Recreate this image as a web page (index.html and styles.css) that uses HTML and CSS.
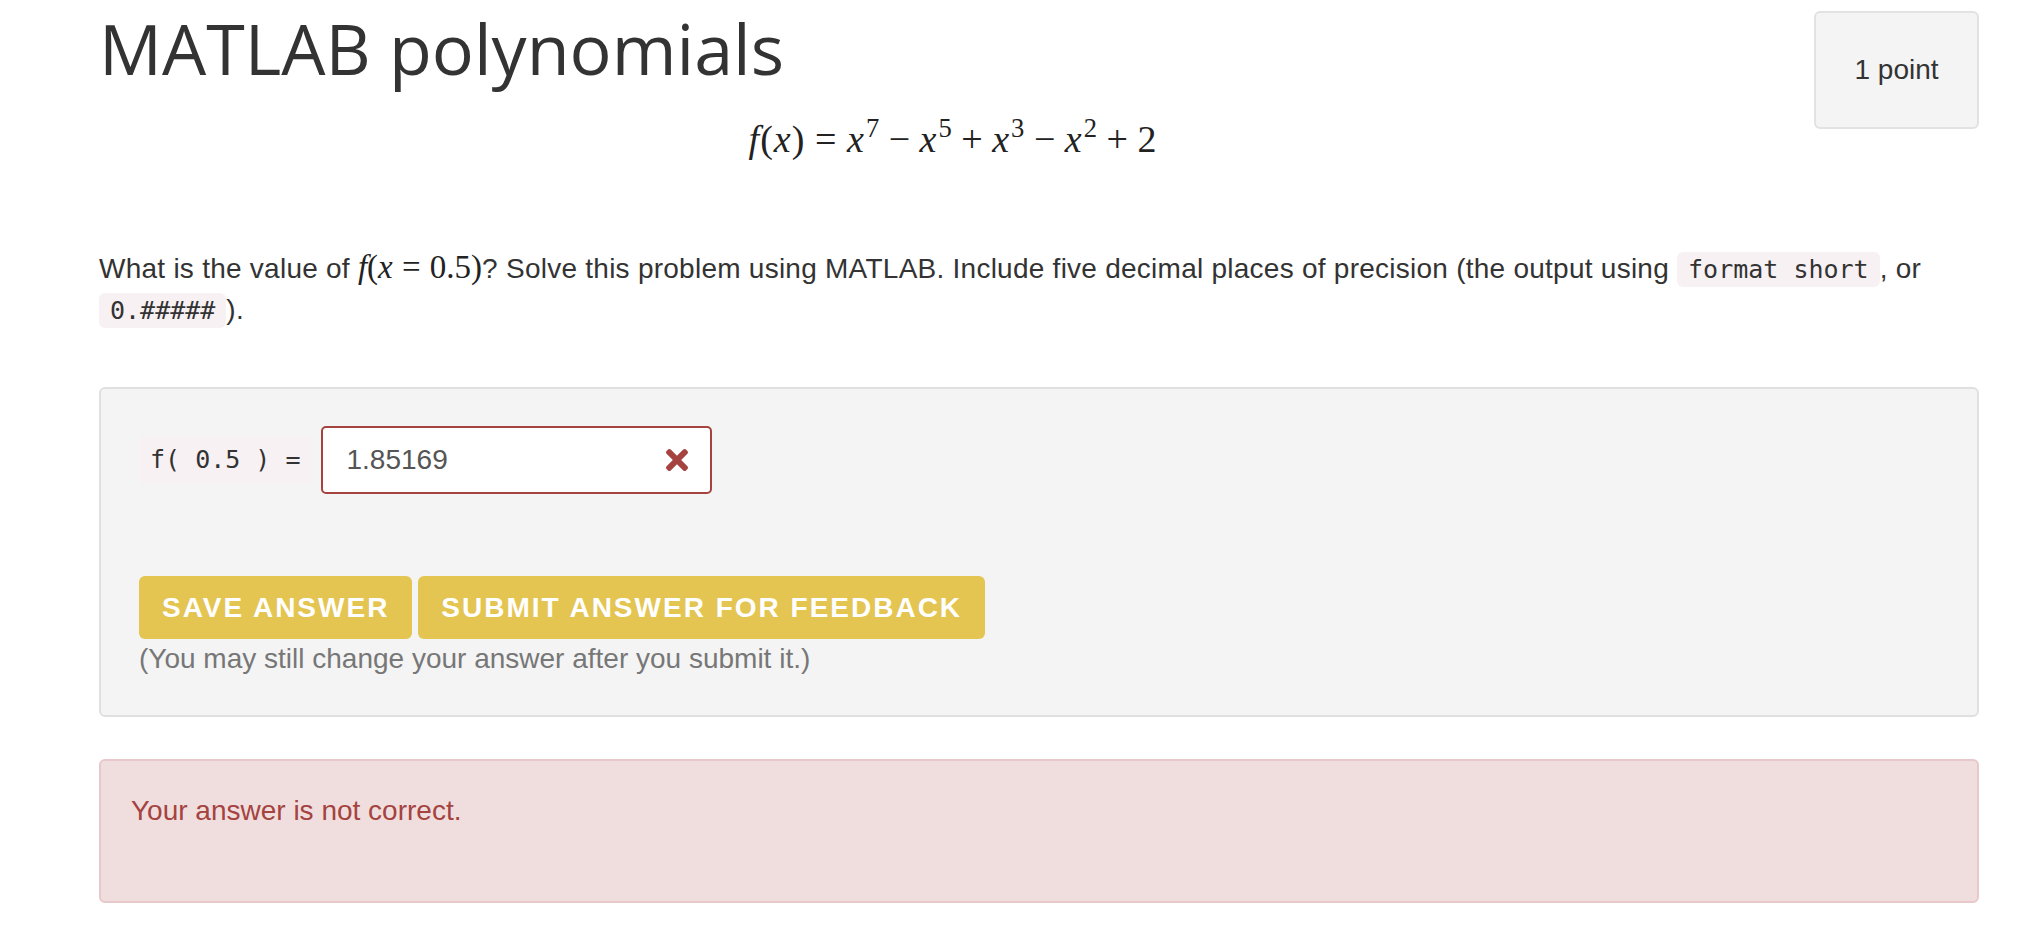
FILE: index.html
```html
<html>
    <head>
        <meta charset="UTF-8">
        <title>MATLAB polynomials</title>
        <link rel="stylesheet" href="styles.css">
    </head>
    <body>
        <div id="page">
            <div class="question-header">
                <div class="header-main">
                    <h1 class="title">MATLAB polynomials</h1>
                    <div class="display-math">
                        <span class="mi">f</span><span class="mo">(</span><span class="mi">x</span><span class="mo">)</span><span class="rel">=</span><span class="mi">x</span><sup>7</sup><span class="bin">&minus;</span><span class="mi">x</span><sup>5</sup><span class="bin">+</span><span class="mi">x</span><sup>3</sup><span class="bin">&minus;</span><span class="mi">x</span><sup>2</sup><span class="bin">+</span><span class="mn">2</span>
                    </div>
                </div>
                <div class="points">1 point</div>
            </div>

            <p class="prompt">What is the value of <span class="inline-math"><span class="mi">f</span>(<span class="mi">x</span><span class="rel">=</span>0.5)</span>? Solve this problem using MATLAB. Include five decimal places of precision (the output using <code>format short</code>, or <code>0.#####</code>).</p>

            <div class="card">
                <div class="input-row">
                    <code class="input-label">f( 0.5 ) =</code>
                    <div class="answer-box">
                        <span class="answer-value">1.85169</span>
                        <svg class="wrong-icon" viewBox="0 0 352 512" width="22" height="32">
                            <path d="M242.72 256l100.07-100.07c12.28-12.28 12.28-32.19 0-44.48l-22.24-22.24c-12.28-12.28-32.19-12.28-44.48 0L176 189.28 75.930 89.21c-12.28-12.28-32.19-12.28-44.48 0L9.21 111.45c-12.28 12.28-12.28 32.19 0 44.48L109.28 256 9.21 356.07c-12.28 12.28-12.28 32.19 0 44.48l22.24 22.240c12.28 12.28 32.2 12.28 44.48 0L176 322.72l100.07 100.07c12.28 12.28 32.2 12.28 44.48 0l22.24-22.24c12.28-12.28 12.28-32.19 0-44.48L242.72 256z" fill="#a4433f"/>
                        </svg>
                    </div>
                </div>
                <div class="buttons">
                    <button class="btn">Save answer</button>
                    <button class="btn">Submit answer for feedback</button>
                </div>
                <div class="help">(You may still change your answer after you submit it.)</div>
            </div>

            <div class="alert">
                <p>Your answer is not correct.</p>
            </div>
        </div>
    </body>
</html>
```

FILE: styles.css
```css
body {
    margin: 0;
    background: #ffffff;
    color: #333333;
    font-family: "Liberation Sans", Arial, sans-serif;
    font-size: 28px;
    line-height: 40px;
}
#page {
    padding: 0 39px 40px 99px;
}
.question-header {
    display: flex;
    gap: 8px;
}
.header-main {
    flex: 1;
}
.title {
    margin: 6px 0 0 0;
    font-family: "Open Sans", sans-serif;
    font-weight: 400;
    font-size: 70px;
    line-height: 84px;
    color: #333333;
}
.display-math {
    margin-top: 24px;
    text-align: center;
    font-family: "Liberation Serif", serif;
    font-size: 38px;
    line-height: 50px;
    color: #222222;
}
.mi {
    font-style: italic;
}
.mi + .mo, .mo + .mi {
    margin-left: 1px;
}
.rel {
    margin: 0 0.28em;
}
.bin {
    margin: 0 0.25em;
}
sup {
    font-size: 70%;
    line-height: 0;
    vertical-align: 0.55em;
    margin-left: 2px;
}
.points {
    margin-top: 11px;
    width: 161px;
    height: 114px;
    border: 2px solid #e2e2e2;
    border-radius: 6px;
    background: #f4f4f4;
    display: flex;
    align-items: center;
    justify-content: center;
}
.prompt {
    margin: 85px 0 0 0;
    line-height: 40px;
    letter-spacing: 0.25px;
}
.inline-math {
    font-family: "Liberation Serif", serif;
    font-size: 33px;
    line-height: 0;
    letter-spacing: 0;
    color: #222222;
}
.inline-math .rel {
    margin: 0 0.28em;
}
code {
    font-family: "DejaVu Sans Mono", monospace;
    font-size: 25px;
    letter-spacing: 0;
    background: #f7f1f3;
    color: #333333;
    padding: 3px 11px;
    border-radius: 6px;
}
.card {
    margin-top: 56px;
    border: 2px solid #e0e0e0;
    border-radius: 6px;
    background: #f4f4f4;
    padding: 37px 38px 36px 38px;
}
.input-row {
    display: flex;
    align-items: center;
    gap: 9px;
}
.input-label {
    padding: 4px 11px;
}
.answer-box {
    border: 2px solid #a4433f;
    border-radius: 5px;
    background: #ffffff;
    display: flex;
    align-items: center;
    justify-content: space-between;
    padding: 0 22px 0 24px;
    box-sizing: border-box;
    width: 391px;
    height: 68px;
}
.answer-value {
    color: #555555;
}
.buttons {
    margin-top: 82px;
    display: flex;
    gap: 6px;
}
.btn {
    font-family: "Liberation Sans", Arial, sans-serif;
    font-size: 28px;
    font-weight: 700;
    text-transform: uppercase;
    letter-spacing: 2px;
    color: #ffffff;
    background: #e4c552;
    border: none;
    border-radius: 6px;
    height: 63px;
    padding: 0 23px;
}
.help {
    color: #777777;
}
.alert {
    margin-top: 42px;
    border: 2px solid #e8c8cb;
    border-radius: 6px;
    background: #f0dede;
    color: #a4433f;
    padding: 30px 30px 30px 30px;
}
.alert p {
    margin: 0 0 40px 0;
}
```
